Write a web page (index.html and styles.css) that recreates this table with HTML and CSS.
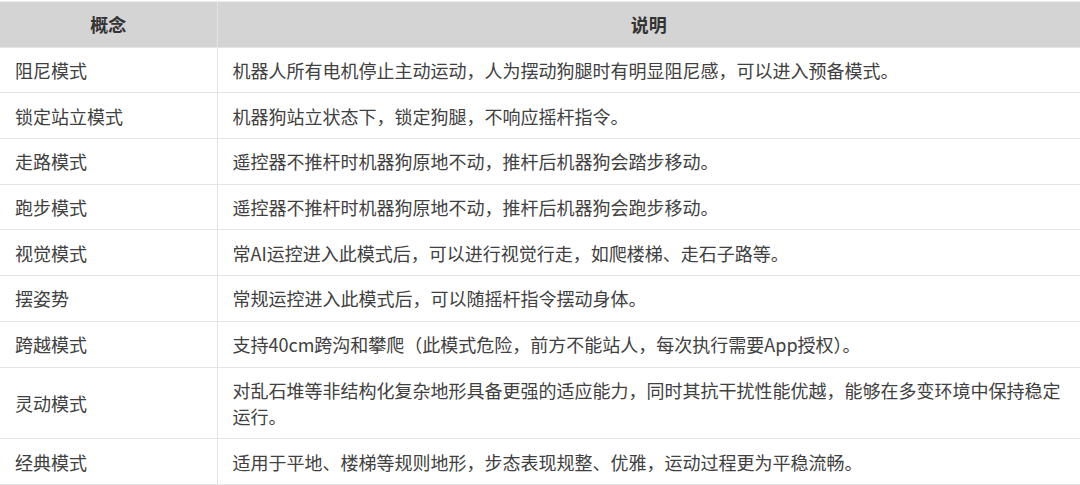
FILE: index.html
```html
<!DOCTYPE html>
<html lang="zh-CN">
<head>
<meta charset="utf-8">
<link rel="stylesheet" href="styles.css">
</head>
<body>
<table class="modes">
  <colgroup>
    <col class="col-name">
    <col class="col-desc">
  </colgroup>
  <thead>
    <tr><th>概念</th><th>说明</th></tr>
  </thead>
  <tbody>
    <tr><td>阻尼模式</td><td>机器人所有电机停止主动运动，人为摆动狗腿时有明显阻尼感，可以进入预备模式。</td></tr>
    <tr><td>锁定站立模式</td><td>机器狗站立状态下，锁定狗腿，不响应摇杆指令。</td></tr>
    <tr><td>走路模式</td><td>遥控器不推杆时机器狗原地不动，推杆后机器狗会踏步移动。</td></tr>
    <tr><td>跑步模式</td><td>遥控器不推杆时机器狗原地不动，推杆后机器狗会跑步移动。</td></tr>
    <tr><td>视觉模式</td><td>常AI运控进入此模式后，可以进行视觉行走，如爬楼梯、走石子路等。</td></tr>
    <tr><td>摆姿势</td><td>常规运控进入此模式后，可以随摇杆指令摆动身体。</td></tr>
    <tr><td>跨越模式</td><td>支持40cm跨沟和攀爬（此模式危险，前方不能站人，每次执行需要App授权）。</td></tr>
    <tr><td>灵动模式</td><td>对乱石堆等非结构化复杂地形具备更强的适应能力，同时其抗干扰性能优越，能够在多变环境中保持稳定运行。</td></tr>
    <tr><td>经典模式</td><td>适用于平地、楼梯等规则地形，步态表现规整、优雅，运动过程更为平稳流畅。</td></tr>
  </tbody>
</table>
</body>
</html>
```

FILE: styles.css
```css
html, body {
  margin: 0;
  padding: 0;
  background: #ffffff;
}

body {
  padding-top: 1px;
  font-family: "Microsoft YaHei", "Noto Sans CJK SC", "Noto Sans", sans-serif;
  font-size: 18px;
  color: #404040;
}

.modes {
  width: 1080px;
  border-collapse: collapse;
  table-layout: fixed;
}

.col-name {
  width: 217px;
}

.modes th,
.modes td {
  border: 1px solid #e4e4e4;
  padding: 9.35px 15px;
  line-height: 26px;
  vertical-align: middle;
}

.modes tr > :first-child {
  border-left: none;
}

.modes tr > :last-child {
  border-right: none;
}

.modes th {
  background: #d4d4d4;
  color: #333333;
  font-weight: bold;
  text-align: center;
  border-top-color: #ececec;
}

.modes td {
  text-align: left;
}
```
